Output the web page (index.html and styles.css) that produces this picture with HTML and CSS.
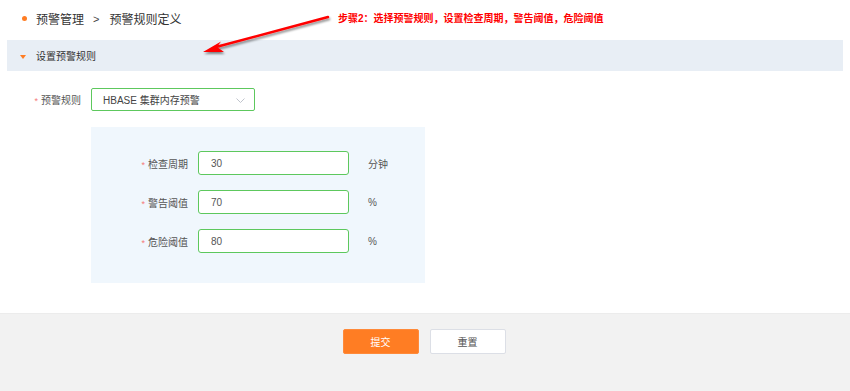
FILE: index.html
```html
<!DOCTYPE html>
<html lang="zh-CN">
<head>
<meta charset="utf-8">
<link rel="stylesheet" href="styles.css">
</head>
<body>
<div class="page">
  <div class="crumb">
    <span class="dot"></span>
    <span class="crumb-item">预警管理</span>
    <span class="crumb-sep">&gt;</span>
    <span class="crumb-item">预警规则定义</span>
  </div>
  <div class="section-bar">
    <span class="caret"></span>
    <span class="section-title">设置预警规则</span>
  </div>
  <div class="rule-row">
    <label class="rule-label"><span class="req">*</span>预警规则</label>
    <div class="select">
      <span class="select-text">HBASE 集群内存预警</span>
      <svg class="chev" width="9" height="5" viewBox="0 0 9 5"><path d="M0.5 0.5 L4.5 4.5 L8.5 0.5" fill="none" stroke="#c0c4cc" stroke-width="1"/></svg>
    </div>
  </div>
  <div class="panel">
    <div class="field">
      <label class="field-label"><span class="req">*</span>检查周期</label>
      <div class="input">30</div>
      <span class="unit">分钟</span>
    </div>
    <div class="field">
      <label class="field-label"><span class="req">*</span>警告阈值</label>
      <div class="input">70</div>
      <span class="unit">%</span>
    </div>
    <div class="field">
      <label class="field-label"><span class="req">*</span>危险阈值</label>
      <div class="input">80</div>
      <span class="unit">%</span>
    </div>
  </div>
  <div class="footer">
    <button class="btn btn-primary">提交</button>
    <button class="btn btn-default">重置</button>
  </div>
  <div class="note">步骤2：选择预警规则，设置检查周期，警告阈值，危险阈值</div>
  <svg class="arrow" width="850" height="80" viewBox="0 0 850 80">
    <defs>
      <filter id="sh" x="-10%" y="-50%" width="120%" height="200%">
        <feDropShadow dx="1" dy="2" stdDeviation="1.2" flood-color="#000" flood-opacity="0.45"/>
      </filter>
    </defs>
    <g filter="url(#sh)">
      <line x1="328" y1="17" x2="216" y2="47" stroke="#f00" stroke-width="2.5" stroke-linecap="round"/>
      <polygon points="203,52 221,41.5 217,47 224,52" fill="#f00"/>
    </g>
  </svg>
</div>
</body>
</html>
```
FILE: styles.css
```css
* { box-sizing: border-box; }
html, body { margin: 0; padding: 0; background: #fff; }
body {
  font-family: "Liberation Sans", "Noto Sans CJK SC", sans-serif;
  color: #333;
  width: 850px;
  height: 391px;
  overflow: hidden;
}
.page { position: relative; height: 391px; display: flex; flex-direction: column; }
.crumb {
  height: 40px;
  display: flex;
  align-items: center;
  padding-left: 22px;
  padding-bottom: 3px;
  font-size: 12px;
  color: #333;
}
.dot {
  width: 5px; height: 5px; border-radius: 50%;
  background: #ff7d23;
  margin-right: 9px;
}
.crumb-sep { margin: 0 10px 0 9px; color: #444; font-size: 11px; }
.section-bar {
  margin: 0 7px 0 7px;
  height: 31px;
  background: #e8eef5;
  display: flex;
  align-items: center;
  padding-left: 13px;
  font-size: 10px;
  color: #333;
}
.caret {
  width: 0; height: 0;
  border-left: 3.5px solid transparent;
  border-right: 3.5px solid transparent;
  border-top: 4.5px solid #ff7d23;
  margin-right: 10px;
  margin-top: 2px;
}
.rule-row {
  display: flex;
  align-items: center;
  margin-top: 17px;
  height: 23px;
}
.rule-label, .field-label {
  text-align: right;
  font-size: 10px;
  color: #555;
  margin-right: 10px;
}
.rule-label { width: 81px; }
.req { color: #f57a7a; margin-right: 3px; font-size: 9px; }
.select {
  width: 164px;
  height: 23px;
  border: 1px solid #5dc85d;
  border-radius: 2px;
  display: flex;
  align-items: center;
  justify-content: space-between;
  padding: 0 9px 0 11px;
  font-size: 10px;
  color: #444;
}
.chev { margin-top: 1px; }
.panel {
  margin: 16px 0 0 91px;
  width: 334px;
  height: 156px;
  background: #f0f7fd;
  padding-top: 24px;
  display: flex;
  flex-direction: column;
  gap: 15px;
}
.field { display: flex; align-items: center; height: 24px; }
.field-label { width: 97px; margin-right: 10px; }
.input {
  width: 151px;
  height: 24px;
  border: 1px solid #5dc85d;
  border-radius: 3px;
  background: #fff;
  display: flex;
  align-items: center;
  padding-left: 12px;
  font-size: 10px;
  color: #555;
}
.unit { margin-left: 19px; font-size: 10px; color: #555; }
.footer {
  margin-top: 30px;
  flex: 1;
  background: #f2f2f2;
  border-top: 1px solid #ececec;
  display: flex;
  justify-content: center;
  align-items: flex-start;
  gap: 11px;
  padding-top: 15px;
  padding-right: 2px;
}
.btn {
  height: 25px;
  font-family: "Liberation Sans", "Noto Sans CJK SC", sans-serif;
  font-size: 10px;
  border-radius: 2px;
  padding: 0;
}
.btn-primary {
  width: 76px;
  background: #ff7d23;
  border: 1px solid #ff8a3a;
  color: #fff;
}
.btn-default {
  width: 76px;
  background: #fff;
  border: 1px solid #dcdfe6;
  color: #555;
}
.note {
  position: absolute;
  left: 338px;
  top: 10px;
  font-size: 10px;
  font-weight: bold;
  color: #f00;
  white-space: nowrap;
  letter-spacing: 0;
}
.arrow { position: absolute; left: 0; top: 0; pointer-events: none; }
```
